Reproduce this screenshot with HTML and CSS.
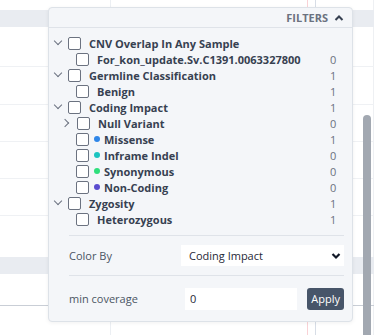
FILE: index.html
```html
<!DOCTYPE html>
<html lang="en">
  <head>
    <meta charset="UTF-8" />
    <meta name="viewport" content="width=device-width, initial-scale=1.0" />
    <title>Filters</title>
    <link rel="stylesheet" href="styles.css">
  </head>
  <body>
    <!-- table behind the popover -->
    <div class="grid">
      <div class="cols">
        <div class="col c1"></div>
        <div class="col c2"></div>
        <div class="col c3"></div>
        <div class="col c4"></div>
        <div class="col c5"></div>
      </div>
      <div class="rows">
        <div class="gap top"></div>
        <div class="band"></div>
        <div class="row r40"></div>
        <div class="row r38"></div>
        <div class="row r37"></div>
        <div class="row r37"></div>
        <div class="row r37"></div>
        <div class="gap mid"></div>
        <div class="band"></div>
        <div class="row last"></div>
      </div>
    </div>
    <div class="scroll"><div class="thumb"></div></div>

    <div class="panel">
      <div class="panel-head">
        <span>FILTERS</span>
        <svg width="10" height="8" viewBox="0 0 10 8"><path d="M1.5 6 L5 2.5 L8.5 6" fill="none" stroke="#374151" stroke-width="2"/></svg>
      </div>

      <div class="tree">
        <div class="node lv0">
          <span class="tog open"></span><span class="box"></span>
          <span class="label">CNV Overlap In Any Sample</span><span class="count"></span>
        </div>
        <div class="node lv1">
          <span class="box"></span>
          <span class="label">For_kon_update.Sv.C1391.0063327800</span><span class="count">0</span>
        </div>
        <div class="node lv0">
          <span class="tog open"></span><span class="box"></span>
          <span class="label">Germline Classification</span><span class="count">1</span>
        </div>
        <div class="node lv1">
          <span class="box"></span>
          <span class="label">Benign</span><span class="count">1</span>
        </div>
        <div class="node lv0">
          <span class="tog open"></span><span class="box"></span>
          <span class="label">Coding Impact</span><span class="count">1</span>
        </div>
        <div class="node lv1 has-tog">
          <span class="tog closed"></span><span class="box"></span>
          <span class="label">Null Variant</span><span class="count">0</span>
        </div>
        <div class="node lv1">
          <span class="box"></span><span class="dot missense"></span>
          <span class="label">Missense</span><span class="count">1</span>
        </div>
        <div class="node lv1">
          <span class="box"></span><span class="dot inframe"></span>
          <span class="label">Inframe Indel</span><span class="count">0</span>
        </div>
        <div class="node lv1">
          <span class="box"></span><span class="dot synonymous"></span>
          <span class="label">Synonymous</span><span class="count">0</span>
        </div>
        <div class="node lv1">
          <span class="box"></span><span class="dot noncoding"></span>
          <span class="label">Non-Coding</span><span class="count">0</span>
        </div>
        <div class="node lv0">
          <span class="tog open"></span><span class="box"></span>
          <span class="label">Zygosity</span><span class="count">1</span>
        </div>
        <div class="node lv1">
          <span class="box"></span>
          <span class="label">Heterozygous</span><span class="count">1</span>
        </div>
      </div>

      <div class="opt color-by">
        <span class="opt-label">Color By</span>
        <div class="select">
          <span>Coding Impact</span>
          <svg width="10" height="8" viewBox="0 0 10 8"><path d="M1.5 2 L5 5.5 L8.5 2" fill="none" stroke="#111827" stroke-width="2.2"/></svg>
        </div>
      </div>

      <div class="opt coverage">
        <span class="opt-label">min coverage</span>
        <input class="num" type="text" value="0" />
        <button class="apply">Apply</button>
      </div>
    </div>
  </body>
</html>
```

FILE: styles.css
```css
body {
  margin: 0;
  width: 386px;
  height: 335px;
  overflow: hidden;
  position: relative;
  background: #fff;
  font-family: "Open Sans", "Noto Sans", sans-serif;
}

/* background table */
.grid {
  position: relative;
  height: 335px;
}
.cols {
  display: flex;
  height: 100%;
}
.col { border-right: 1px solid #eceff3; }
.c1 { width: 110px; }
.c2 { width: 196px; border-right-color: #f9d2d6; }
.c3 { width: 7px; border-right-color: #d7dde6; }
.c4 { width: 57px; border-right-color: #eef0f3; }
.c5 { flex: 1; border-right: none; }
.rows {
  position: absolute;
  inset: 0;
  display: flex;
  flex-direction: column;
}
.gap.top { height: 10px; }
.band {
  height: 17px;
  background: #e9ecf1;
  width: 374px;
}
.row {
  border-bottom: 1px solid #eff1f4;
  width: 374px;
}
.r40 { height: 39px; }
.r38 { height: 37px; }
.r37 { height: 36px; }
.gap.mid { height: 41px; }
.row.last {
  height: 31px;
  border-bottom-color: #c9ced6;
}

.scroll {
  position: absolute;
  left: 361px;
  top: 0;
  width: 12px;
  height: 335px;
}
.thumb {
  margin: 115px 0 0 2px;
  width: 8px;
  height: 230px;
  border-radius: 4px;
  background: #a2a8b1;
}

/* popover */
.panel {
  position: absolute;
  left: 48px;
  top: 7px;
  width: 303px;
  height: 313px;
  background: #f4f6f9;
  border: 1px solid #dde2e8;
  border-radius: 4px;
  box-shadow: 0 1px 4px rgba(0, 0, 0, 0.06);
  color: #374151;
}
.panel-head {
  height: 19px;
  border-bottom: 1px solid #dfe3e9;
  display: flex;
  align-items: center;
  justify-content: flex-end;
  gap: 6px;
  padding-right: 8px;
  font-size: 11px;
  font-weight: 700;
  color: #6b7280;
}

.tree {
  padding: 7px 0 0 0;
}
.node {
  height: 16px;
  display: flex;
  align-items: center;
  font-size: 11px;
  font-weight: 700;
  color: #374151;
  white-space: nowrap;
}
.node.lv0 { padding-left: 4px; }
.node.lv1 { padding-left: 27px; }
.node.lv1.has-tog { padding-left: 13px; }
.tog {
  width: 10px;
  height: 10px;
  margin-right: 5px;
  position: relative;
}
.tog::before {
  content: "";
  position: absolute;
  width: 5px;
  height: 5px;
  border-right: 1.3px solid #6b7280;
  border-bottom: 1.3px solid #6b7280;
}
.tog.open::before { left: 2px; top: 0; transform: rotate(45deg); }
.tog.closed::before { left: 0; top: 2px; transform: rotate(-45deg); }
.box {
  width: 11px;
  height: 11px;
  border: 1px solid #6b7280;
  border-radius: 2px;
  background: #fff;
  margin-right: 8px;
  flex: none;
}
.dot {
  width: 6px;
  height: 6px;
  border-radius: 50%;
  margin: 0 4px 0 -3px;
}
.missense { background: #2f86e8; }
.inframe { background: #1cc4c0; }
.synonymous { background: #2fdf7c; }
.noncoding { background: #5a4ccf; }
.label { flex: 1; }
.count {
  width: 22px;
  font-weight: 400;
  color: #6b7280;
  font-size: 11px;
}

.opt {
  margin: 0 8px 0 20px;
  display: flex;
  align-items: center;
  font-size: 11px;
  color: #4b5563;
}
.color-by {
  margin-top: 8px;
  border-top: 1px solid #dfe3e9;
  border-bottom: 1px solid #dfe3e9;
  height: 39px;
}
.opt-label { width: 112px; }
.select {
  flex: 1;
  height: 21px;
  background: #fff;
  display: flex;
  align-items: center;
  justify-content: space-between;
  padding: 0 3px 0 8px;
  color: #1f2937;
}
.coverage { height: 45px; }
.coverage .opt-label { width: 116px; }
.num {
  height: 22px;
  border: none;
  padding: 0 5px;
  font: inherit;
  color: #1f2937;
  background: #fff;
  box-sizing: border-box;
  width: 112px;
}
.apply {
  margin-left: auto;
  height: 22px;
  padding: 0 4px;
  border: none;
  border-radius: 3px;
  background: #475569;
  color: #fff;
  font: inherit;
  font-size: 11px;
}
```
